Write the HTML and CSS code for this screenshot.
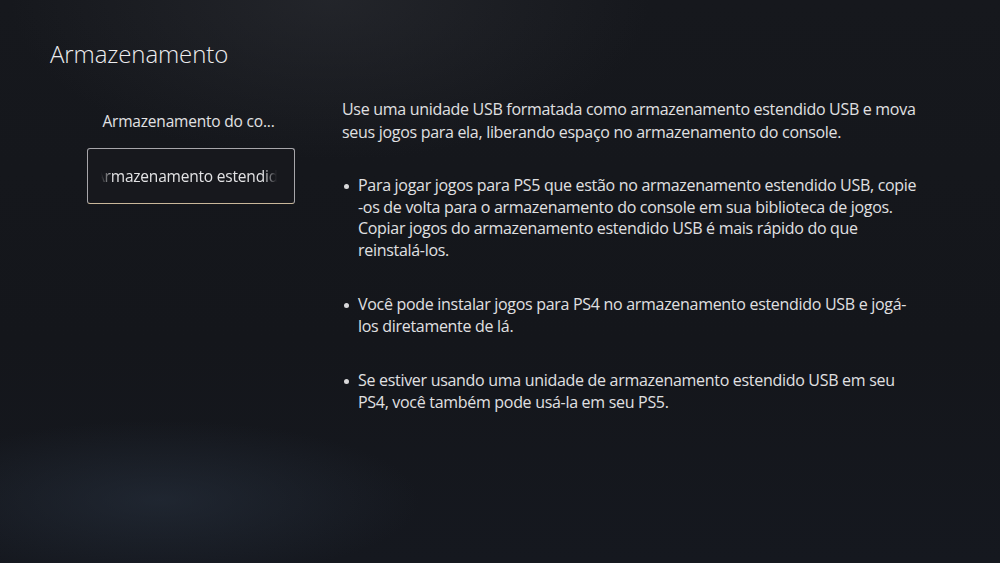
FILE: index.html
```html
<!DOCTYPE html>
<html lang="pt">
<head>
    <meta charset="UTF-8">
    <meta name="viewport" content="width=device-width, initial-scale=1.0">
    <title>Armazenamento</title>
    <link rel="stylesheet" href="styles.css">
</head>
<body>
    <div class="screen">
        <h1 class="title">Armazenamento</h1>

        <div class="content">
            <div class="menu">
                <div class="menu-item">Armazenamento do co...</div>
                <div class="menu-item selected">
                    <span class="scroll-text">Armazenamento estendido USB</span>
                </div>
            </div>

            <div class="info">
                <p class="lead">Use uma unidade USB formatada como armazenamento estendido USB e mova seus jogos para ela, liberando espaço no armazenamento do console.</p>
                <ul class="notes">
                    <li>Para jogar jogos para PS5 que estão no armazenamento estendido USB, copie<br>-os de volta para o armazenamento do console em sua biblioteca de jogos. Copiar jogos do armazenamento estendido USB é mais rápido do que<br>reinstalá-los.</li>
                    <li>Você pode instalar jogos para PS4 no armazenamento estendido USB e jogá-<br>los diretamente de lá.</li>
                    <li>Se estiver usando uma unidade de armazenamento estendido USB em seu PS4, você também pode usá-la em seu PS5.</li>
                </ul>
            </div>
        </div>
    </div>
</body>
</html>
```

FILE: styles.css
```css
html, body {
    margin: 0;
    height: 100%;
}
body {
    font-family: "Open Sans", "Noto Sans", sans-serif;
    color: #e4e4e6;
    background-color: #15171d;
    background-image:
        radial-gradient(ellipse 260px 80px at 160px 500px, rgba(40, 50, 64, 0.55), transparent),
        radial-gradient(ellipse 320px 160px at 330px 0px, rgba(50, 52, 58, 0.45), transparent),
        linear-gradient(180deg, #16181d 0%, #14161b 60%, #15181f 100%);
    overflow: hidden;
}
.screen {
    width: 1000px;
    height: 563px;
    padding: 37px 0 0 50px;
    box-sizing: border-box;
}
.title {
    margin: 0;
    font-size: 24px;
    font-weight: 300;
    letter-spacing: -0.1px;
    color: #ececee;
    line-height: 34px;
}
.content {
    display: flex;
    margin-top: 24px;
}
.menu {
    width: 208px;
    margin-left: 37px;
    padding-top: 5px;
    display: flex;
    flex-direction: column;
    align-items: center;
}
.menu-item {
    font-size: 15.5px;
    line-height: 22px;
    color: #e2e2e4;
    letter-spacing: -0.2px;
    padding: 10px 0 0 0;
    margin-left: -5px;
}
.menu-item.selected {
    box-sizing: border-box;
    width: 208px;
    height: 56px;
    margin: 16px 0 0 0;
    padding: 0 15px;
    border: 1.5px solid #a7a6aa;
    border-bottom-color: #c9b79a;
    border-radius: 3px;
    background: #17181d;
    overflow: hidden;
    white-space: nowrap;
    display: flex;
    align-items: center;
}
.scroll-text {
    display: block;
    margin-left: -8px;
    -webkit-mask-image: linear-gradient(90deg, transparent 6px, #000 18px, #000 168px, transparent 182px);
    mask-image: linear-gradient(90deg, transparent 6px, #000 18px, #000 168px, transparent 182px);
    line-height: 53px;
}
.info {
    margin-left: 47px;
    width: 578px;
    font-size: 16px;
    line-height: 21.5px;
    letter-spacing: -0.3px;
    color: #e0e0e2;
}
.lead {
    margin: 3px 0 0;
    line-height: 23px;
}
.notes {
    list-style: none;
    margin: 31px 0 0;
    padding: 0;
}
.notes li {
    position: relative;
    padding-left: 16px;
    margin-bottom: 33px;
}
.notes li::before {
    content: "";
    position: absolute;
    left: 2px;
    top: 9px;
    width: 5px;
    height: 5px;
    border-radius: 50%;
    background: #d8d8da;
}
```
